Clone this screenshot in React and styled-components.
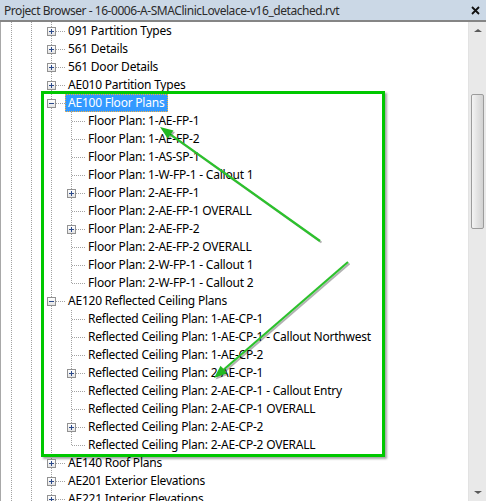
import React from 'react';
import styled, { createGlobalStyle, css } from 'styled-components';

const GlobalStyle = createGlobalStyle`
  html, body {
    margin: 0;
    padding: 0;
    overflow: hidden;
    background: #ffffff;
  }
`;

const DOT = '#a3a3a3';

const Panel = styled.div`
  position: relative;
  width: 486px;
  height: 501px;
  display: flex;
  flex-direction: column;
  overflow: hidden;
  font-family: "Noto Sans", "Open Sans", sans-serif;
  font-size: 12px;
  color: #000;
`;

const TitleBar = styled.div`
  height: 20px;
  flex: none;
  display: flex;
  align-items: center;
  justify-content: space-between;
  padding: 0 6px 0 4px;
  background: #cbd8e6;
  color: #2b2b2b;
  letter-spacing: -0.45px;
  border-bottom: 2px solid #858585;
`;

const Body = styled.div`
  flex: 1;
  display: flex;
  min-height: 0;
`;

const Tree = styled.div`
  flex: 1;
  border-left: 1px solid #a8a8a8;
  overflow: hidden;
`;

const Row = styled.div`
  height: 18px;
  display: flex;
  align-items: center;
  white-space: nowrap;
`;

const vLine = css`
  content: '';
  position: absolute;
  left: 10px;
  width: 1px;
  background: repeating-linear-gradient(to bottom, ${DOT} 0 1px, transparent 1px 2px);
`;

const Cell = styled.div`
  position: relative;
  flex: none;
  width: 20px;
  height: 18px;
  align-self: stretch;

  ${({ $v }) => $v === 'full' && css`&::before { ${vLine}; top: 0; bottom: 0; }`}
  ${({ $v }) => $v === 'half' && css`&::before { ${vLine}; top: 0; height: 9px; }`}
  ${({ $h }) => $h && css`
    &::after {
      content: '';
      position: absolute;
      left: 11px;
      right: -4px;
      top: 9px;
      height: 1px;
      background: repeating-linear-gradient(to right, ${DOT} 0 1px, transparent 1px 2px);
    }
  `}
`;

const Toggle = styled.span`
  position: absolute;
  z-index: 1;
  left: 6px;
  top: 5px;
  width: 7px;
  height: 7px;
  border: 1px solid #929292;
  background: linear-gradient(#ffffff, #e4e4e4);

  &::before {
    content: '';
    position: absolute;
    left: 1px;
    top: 3px;
    width: 5px;
    height: 1px;
    background: #2c4a8a;
  }
  ${({ $open }) => !$open && css`
    &::after {
      content: '';
      position: absolute;
      left: 3px;
      top: 1px;
      width: 1px;
      height: 5px;
      background: #2c4a8a;
    }
  `}
`;

const Label = styled.span`
  margin-left: 4px;
  padding: 0 2px;
  line-height: 16px;
  letter-spacing: -0.22px;
  border: 1px solid transparent;
  ${({ $selected }) => $selected && css`
    background: #3399ff;
    color: #fff;
    border: 1px dotted #f5b041;
  `}
`;

const Scrollbar = styled.div`
  width: 17px;
  flex: none;
  background: #e9e9e9;
  border-left: 1px solid #e2e2e2;
  display: flex;
  flex-direction: column;
  align-items: center;
`;

const Arrow = styled.div`
  height: 17px;
  width: 100%;
  display: flex;
  align-items: center;
  justify-content: center;
  &::before {
    content: '';
    border-left: 4px solid transparent;
    border-right: 4px solid transparent;
    ${({ $down }) => $down
      ? css`border-top: 3px solid #5a5a5a;`
      : css`border-bottom: 3px solid #5a5a5a;`}
  }
`;

const Track = styled.div`
  flex: 1;
  width: 100%;
  display: flex;
  flex-direction: column;
  align-items: center;
  padding-top: 55px;
`;

const Thumb = styled.div`
  width: 13px;
  height: 135px;
  box-sizing: border-box;
  border: 1px solid #9c9c9c;
  border-radius: 2px;
  background: linear-gradient(to right, #f4f4f4, #e2e2e2 50%, #d2d2d2);
`;

const Highlight = styled.div`
  position: absolute;
  left: 41px;
  top: 91px;
  width: 338px;
  height: 360px;
  border: 3px solid #00c800;
  box-shadow: 2px 2px 2px rgba(0, 0, 0, 0.35);
  pointer-events: none;
`;

const Overlay = styled.svg`
  position: absolute;
  left: 0;
  top: 0;
  pointer-events: none;
`;

const rows = [
  { level: 1, text: '091 Partition Types', toggle: '+' },
  { level: 1, text: '561 Details', toggle: '+' },
  { level: 1, text: '561 Door Details', toggle: '+' },
  { level: 1, text: 'AE010 Partition Types', toggle: '+' },
  { level: 1, text: 'AE100 Floor Plans', toggle: '-', selected: true },
  { level: 2, text: 'Floor Plan: 1-AE-FP-1' },
  { level: 2, text: 'Floor Plan: 1-AE-FP-2' },
  { level: 2, text: 'Floor Plan: 1-AS-SP-1' },
  { level: 2, text: 'Floor Plan: 1-W-FP-1 - Callout 1' },
  { level: 2, text: 'Floor Plan: 2-AE-FP-1', toggle: '+' },
  { level: 2, text: 'Floor Plan: 2-AE-FP-1 OVERALL' },
  { level: 2, text: 'Floor Plan: 2-AE-FP-2', toggle: '+' },
  { level: 2, text: 'Floor Plan: 2-AE-FP-2 OVERALL' },
  { level: 2, text: 'Floor Plan: 2-W-FP-1 - Callout 1' },
  { level: 2, text: 'Floor Plan: 2-W-FP-1 - Callout 2', last: true },
  { level: 1, text: 'AE120 Reflected Ceiling Plans', toggle: '-' },
  { level: 2, text: 'Reflected Ceiling Plan: 1-AE-CP-1' },
  { level: 2, text: 'Reflected Ceiling Plan: 1-AE-CP-1 - Callout Northwest' },
  { level: 2, text: 'Reflected Ceiling Plan: 1-AE-CP-2' },
  { level: 2, text: 'Reflected Ceiling Plan: 2-AE-CP-1', toggle: '+' },
  { level: 2, text: 'Reflected Ceiling Plan: 2-AE-CP-1 - Callout Entry' },
  { level: 2, text: 'Reflected Ceiling Plan: 2-AE-CP-1 OVERALL' },
  { level: 2, text: 'Reflected Ceiling Plan: 2-AE-CP-2', toggle: '+' },
  { level: 2, text: 'Reflected Ceiling Plan: 2-AE-CP-2 OVERALL', last: true },
  { level: 1, text: 'AE140 Roof Plans', toggle: '+' },
  { level: 1, text: 'AE201 Exterior Elevations', toggle: '+' },
  { level: 1, text: 'AE221 Interior Elevations', toggle: '+' },
];

const TreeRow = ({ level, text, toggle, selected, last }) => (
  <Row>
    <Cell $v="full" />
    <Cell $v="full" />
    {level === 1 ? (
      <Cell $v="full" $h>
        {toggle && <Toggle $open={toggle === '-'} />}
      </Cell>
    ) : (
      <>
        <Cell $v="full" />
        <Cell $v={last ? 'half' : 'full'} $h>
          {toggle && <Toggle $open={toggle === '-'} />}
        </Cell>
      </>
    )}
    <Label $selected={selected}>{text}</Label>
  </Row>
);

const GreenArrow = ({ x1, y1, x2, y2 }) => {
  const ang = Math.atan2(y2 - y1, x2 - x1);
  const len = 13;
  const wid = 5;
  const bx = x2 - Math.cos(ang) * len;
  const by = y2 - Math.sin(ang) * len;
  const px = -Math.sin(ang) * wid;
  const py = Math.cos(ang) * wid;
  const head = `${x2},${y2} ${bx + px},${by + py} ${bx - px},${by - py}`;
  return (
    <g>
      <g transform="translate(1.5,1.5)" opacity="0.3">
        <line x1={x1} y1={y1} x2={bx} y2={by} stroke="#000" strokeWidth="2" />
        <polygon points={head} fill="#000" />
      </g>
      <line x1={x1} y1={y1} x2={bx} y2={by} stroke="#2cc12c" strokeWidth="2.2" />
      <polygon points={head} fill="#22b822" />
    </g>
  );
};

export default function App() {
  return (
    <>
      <GlobalStyle />
      <Panel>
        <TitleBar>
          <span>Project Browser - 16-0006-A-SMAClinicLovelace-v16_detached.rvt</span>
          <svg width="9" height="9" viewBox="0 0 9 9">
            <path d="M1 1 L8 8 M8 1 L1 8" stroke="#111" strokeWidth="1.8" />
          </svg>
        </TitleBar>
        <Body>
          <Tree>
            {rows.map((r, i) => (
              <TreeRow key={i} {...r} />
            ))}
          </Tree>
          <Scrollbar>
            <Arrow />
            <Track>
              <Thumb />
            </Track>
            <Arrow $down />
          </Scrollbar>
        </Body>
        <Highlight />
        <Overlay width="486" height="501">
          <GreenArrow x1={320} y1={241} x2={160} y2={127} />
          <GreenArrow x1={348} y1={262} x2={214} y2={378} />
        </Overlay>
      </Panel>
    </>
  );
}
